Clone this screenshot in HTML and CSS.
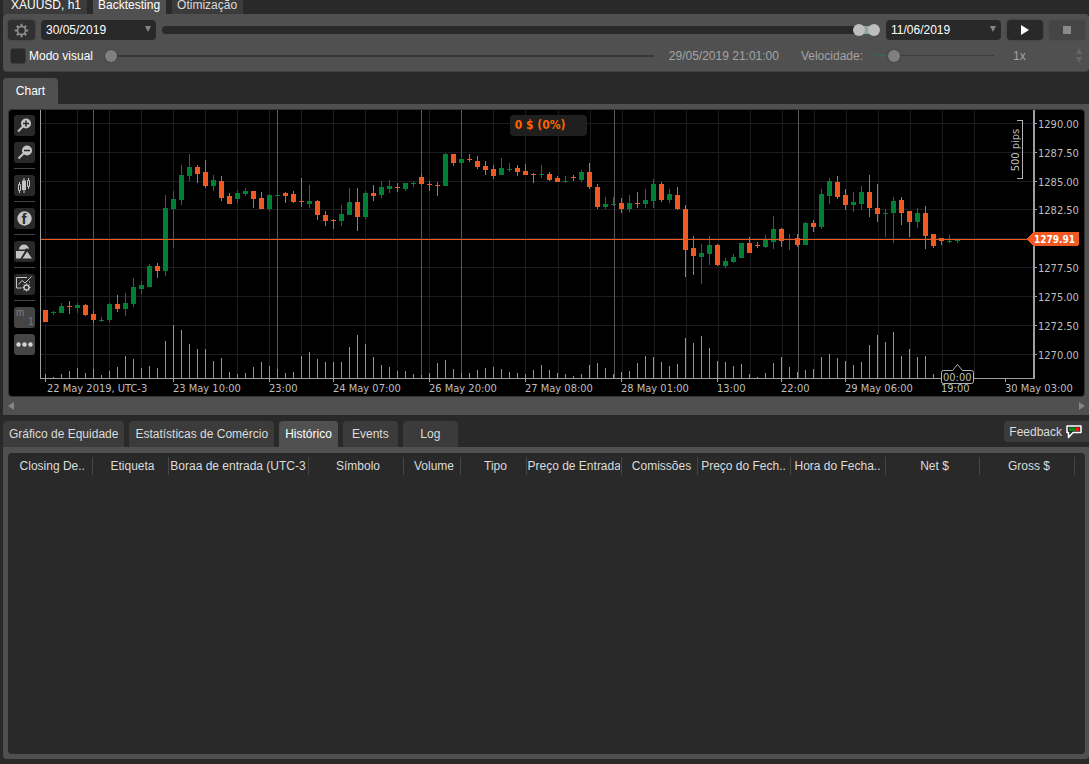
FILE: index.html
```
<!DOCTYPE html>
<html lang="pt">

<head>
    <meta charset="UTF-8">
    <meta name="viewport" content="width=device-width, initial-scale=1.0">
    <title>Backtesting</title>
    <link rel="stylesheet" href="styles.css">
</head>

<body>
    <nav class="tabs top-tabs">
        <button class="tab symbol">XAUUSD, h1</button>
        <button class="tab active">Backtesting</button>
        <button class="tab">Otimização</button>
    </nav>

    <section class="panel settings">
        <div class="row">
            <button class="icon-btn gear" aria-label="Configurações">
                <svg width="15" height="15" viewBox="0 0 15 15">
                    <circle cx="7.5" cy="7.5" r="4" fill="none" stroke="#909090" stroke-width="1.6"/>
                    <path d="M7.5 .8v2.4M7.5 11.8v2.4M.8 7.5h2.4M11.8 7.5h2.4M2.8 2.8l1.6 1.6M10.6 10.6l1.6 1.6M12.2 2.8l-1.6 1.6M4.4 10.6l-1.6 1.6" stroke="#909090" stroke-width="2"/>
                </svg>
            </button>
            <div class="date">
                <select aria-label="Data inicial"><option>30/05/2019</option></select>
            </div>
            <div class="range">
                <span class="range-fill"></span>
                <input type="range" min="0" max="1000" value="979" aria-label="Início">
                <input type="range" min="0" max="1000" value="1000" aria-label="Fim">
            </div>
            <div class="date">
                <select aria-label="Data final"><option>11/06/2019</option></select>
            </div>
            <button class="icon-btn play" aria-label="Iniciar">
                <svg width="8" height="10" viewBox="0 0 8 10"><path d="M0 0l8 5-8 5z" fill="#fff"/></svg>
            </button>
            <button class="icon-btn stop" aria-label="Parar" disabled>
                <svg width="8" height="8" viewBox="0 0 8 8"><path d="M0 0h8v8H0z" fill="#8a8a8a"/></svg>
            </button>
        </div>
        <div class="row visual">
            <label class="check"><input type="checkbox">Modo visual</label>
            <input class="slider progress" type="range" min="0" max="100" value="0" aria-label="Progresso">
            <span class="clock">29/05/2019 21:01:00</span>
            <label class="muted" for="speed">Velocidade:</label>
            <input class="slider speed" id="speed" type="range" min="0" max="100" value="12">
            <div class="spin">
                <input type="text" value="1x" aria-label="Multiplicador" readonly>
                <div class="spin-btns">
                    <button aria-label="Mais"></button>
                    <button class="down" aria-label="Menos"></button>
                </div>
            </div>
        </div>
    </section>

    <nav class="tabs chart-tabs">
        <button class="tab active">Chart</button>
    </nav>

    <section class="panel chart-panel">
        <div class="chart">
            <div class="tools">
                <button class="tool" aria-label="Zoom in">
                    <svg viewBox="0 0 21 21"><path d="M4 16.500l5-5" stroke="#c4c4c4" stroke-width="2"/><circle cx="12" cy="8.500" r="5" fill="#c4c4c4"/><path d="M9 8.500h6M12 5.500v6" stroke="#292929" stroke-width="1.500"/></svg>
                </button>
                <button class="tool" aria-label="Zoom out">
                    <svg viewBox="0 0 21 21"><path d="M4.500 16.500l5-5" stroke="#c4c4c4" stroke-width="2"/><circle cx="13" cy="8.500" r="5" fill="#c4c4c4"/><path d="M10 8.500h6" stroke="#292929" stroke-width="1.500"/></svg>
                </button>
                <hr>
                <button class="tool" aria-label="Chart type">
                    <svg viewBox="0 0 21 21">
                        <path d="M5.500 7v11M10 3v15M14.500 3v11" stroke="#c4c4c4"/>
                        <path d="M4.500 9.500h2v6h-2zM13.500 5.500h2v6h-2z" fill="#292929" stroke="#c4c4c4"/>
                        <path d="M8 5.500h4v9.500H8z" fill="#c4c4c4"/>
                    </svg>
                </button>
                <hr>
                <button class="tool" aria-label="Indicators">
                    <svg viewBox="0 0 21 21"><circle cx="10.500" cy="10.500" r="7.200" fill="#c4c4c4"/><text class="f" x="7.500" y="15.500">f</text></svg>
                </button>
                <hr>
                <button class="tool" aria-label="Drawing">
                    <svg viewBox="0 0 21 21" fill="#c4c4c4"><path d="M5 8.500a5 5 0 0 1 10 0l-1-1h-2L11 8.500zM2 10h9l-4.500 7.500H2zM13.200 10.500L18 17.500H8.500z"/></svg>
                </button>
                <hr>
                <button class="tool" aria-label="Chart settings">
                    <svg viewBox="0 0 21 21" fill="none" stroke="#c4c4c4">
                        <path d="M13 3.500H2.500v10.500h5M4.500 10.500L8 6.500l3 2.500 6.500-6.500M15.500 7.500v1"/>
                        <circle cx="12.500" cy="13.500" r="2.500" stroke-width="1.500"/>
                        <path d="M12.500 9.500v1.500M12.500 16v1.500M8.500 13.500H10M15 13.500h1.500M9.700 10.700l1 1M14.300 15.300l1 1M15.300 10.700l-1 1M10.700 15.300l-1 1"/>
                    </svg>
                </button>
                <hr>
                <button class="tool light" aria-label="Timeframe">
                    <svg viewBox="0 0 21 21" fill="#7c7c7c"><text x="2" y="9">m</text><text x="14" y="18">1</text></svg>
                </button>
                <button class="tool light" aria-label="More">
                    <svg viewBox="0 0 21 21" fill="#d4d4d4"><circle cx="4.500" cy="10.500" r="2.200"/><circle cx="10.500" cy="10.500" r="2.200"/><circle cx="16.500" cy="10.500" r="2.200"/></svg>
                </button>
            </div>
            <div class="plot">
                <svg id="plot"></svg>
                <div class="profit">0 $ (0%)</div>
            </div>
        </div>
        <div class="scroll">
            <button aria-label="Voltar"></button>
            <button class="next" aria-label="Avançar"></button>
        </div>
    </section>

    <div class="bottom-bar">
        <nav class="tabs">
            <button class="tab">Gráfico de Equidade</button>
            <button class="tab">Estatísticas de Comércio</button>
            <button class="tab active">Histórico</button>
            <button class="tab">Events</button>
            <button class="tab">Log</button>
        </nav>
        <button class="feedback">Feedback
            <svg width="16" height="14" viewBox="0 0 16 14">
                <path d="M1 1h14v6.500H7l-4.500 5V7.500H1z" fill="#292929" stroke="#fff" stroke-width="1.500" stroke-linejoin="round"/>
                <path d="M3 2.500h6v3.500H3z" fill="#0a8a12"/>
                <path d="M9 2.500h4.500v3.500H9z" fill="#f01414"/>
            </svg>
        </button>
    </div>

    <section class="panel history">
        <div class="list">
            <table>
                <colgroup>
                    <col class="w84"><col class="w76"><col class="w140"><col class="w95"><col class="w57"><col class="w66"><col class="w95"><col class="w76"><col class="w93"><col class="w95"><col class="w94"><col class="w95"><col class="w11">
                </colgroup>
                <thead>
                    <tr>
                        <th><span>Closing De..</span></th>
                        <th><span>Etiqueta</span></th>
                        <th class="long"><span>Boraa de entrada (UTC-3</span></th>
                        <th><span>Símbolo</span></th>
                        <th><span>Volume</span></th>
                        <th><span>Tipo</span></th>
                        <th class="long"><span>Preço de Entrada</span></th>
                        <th><span>Comissões</span></th>
                        <th class="long"><span>Preço do Fech..</span></th>
                        <th class="long"><span>Hora do Fecha..</span></th>
                        <th><span>Net $</span></th>
                        <th><span>Gross $</span></th>
                        <td></td>
                    </tr>
                </thead>
            </table>
        </div>
    </section>

    <script>
        // one row per bar: direction, high, body top, body bottom, low, volume top
        const bars = [
            ['d',200,200,212,212,264], ['u',201,202,203,205,267], ['u',193,196,203,203,264], ['d',191,196,197,204,261],
            ['u',193,195,198,203,258], ['d',194,195,205,206,263], ['d',201,204,210,213,259], ['u',207,210,211,212,265],
            ['u',193,194,210,212,261], ['d',185,194,199,202,257], ['u',183,193,199,206,246], ['u',168,177,194,197,249],
            ['u',171,175,179,184,258], ['u',154,156,177,177,256], ['d',153,156,161,168,258], ['u',85,98,161,166,231],
            ['u',81,89,99,138,215], ['u',55,65,90,95,220], ['u',44,57,66,71,234], ['d',55,57,64,73,239],
            ['d',50,62,76,78,239], ['u',65,70,76,81,251], ['d',66,71,88,91,248], ['d',83,86,94,94,262],
            ['u',80,83,89,93,264], ['u',78,81,84,86,263], ['d',81,81,89,98,257], ['d',82,88,99,99,252],
            ['u',84,85,99,101,256], ['u',76,85,86,87,259], ['d',82,83,86,93,263], ['d',81,84,92,93,262],
            ['d',68,91,92,97,246], ['u',75,91,94,98,242], ['d',90,91,105,110,249], ['d',101,105,111,116,252],
            ['d',109,110,111,119,252], ['u',95,104,111,116,252], ['u',78,92,105,105,237], ['d',78,92,107,121,225],
            ['u',81,83,107,109,234], ['d',75,83,86,91,247], ['u',71,77,85,88,255], ['u',70,76,79,83,257],
            ['d',73,77,78,82,261], ['u',73,73,79,81,261], ['u',71,73,74,77,264], ['d',63,67,74,75,265],
            ['d',71,74,75,81,263], ['d',72,75,76,86,253], ['u',43,44,76,76,250], ['d',44,44,53,56,259],
            ['u',45,49,53,53,263], ['d',44,49,50,52,263], ['d',46,51,57,59,260], ['d',51,56,60,65,258],
            ['d',55,59,66,69,257], ['u',48,58,65,65,259], ['u',53,59,60,62,262], ['d',55,58,62,66,263],
            ['d',54,61,65,65,264], ['d',63,64,65,73,260], ['u',55,64,65,68,255], ['d',62,64,70,71,260],
            ['d',66,68,72,72,263], ['u',66,71,72,73,264], ['d',65,67,68,71,266], ['u',60,62,70,72,264],
            ['d',53,62,77,79,255], ['d',74,77,97,99,253], ['u',87,94,97,99,258], ['u',87,94,95,96,264],
            ['d',88,93,99,103,262], ['u',85,93,99,102,261], ['d',82,93,94,98,253], ['u',79,90,94,98,246],
            ['u',69,74,91,98,247], ['d',72,74,90,92,252], ['u',79,84,90,93,256], ['d',77,85,99,100,254],
            ['d',95,99,140,167,228], ['d',126,138,146,165,233], ['u',134,143,147,174,226], ['u',126,135,144,155,238],
            ['d',134,135,155,156,251], ['u',148,151,156,158,252], ['u',144,147,152,153,256], ['u',133,133,148,148,254],
            ['d',127,133,143,143,264], ['d',132,135,136,138,267], ['u',125,129,137,138,263], ['u',106,119,132,139,253],
            ['d',118,119,131,137,247], ['u',124,129,130,140,257], ['d',124,128,135,137,262], ['u',112,113,135,135,260],
            ['d',110,113,117,122,259], ['u',79,84,117,119,247], ['u',68,71,86,94,244], ['d',66,72,87,89,248],
            ['d',79,85,95,100,251], ['u',82,92,95,102,255], ['u',76,82,94,100,252], ['d',65,82,98,107,235],
            ['d',74,98,104,112,225], ['u',99,103,104,127,232], ['u',87,91,103,133,222], ['d',87,90,103,115,246],
            ['d',101,101,112,127,239], ['u',98,103,112,118,247], ['d',96,103,126,139,246], ['d',124,124,136,138,264],
            ['d',128,128,131,135,268], ['u',125,131,132,133,268], ['u',130,130,131,133,268]
        ];
        const prices = [
            [13, '1290.00'], [42, '1287.50'], [71, '1285.00'], [99, '1282.50'], [128, ''],
            [157, '1277.50'], [186, '1275.00'], [215, '1272.50'], [244, '1270.00']
        ];
        const times = [
            [5, '22 May 2019, UTC-3'], [133, '23 May 10:00'], [229, '23:00'], [293, '24 May 07:00'],
            [389, '26 May 20:00'], [485, '27 May 08:00'], [581, '28 May 01:00'], [677, '13:00'],
            [741, '22:00'], [805, '29 May 06:00'], [901, '19:00'], [965, '30 May 03:00']
        ];
        const sessions = [53, 237, 381, 421, 574, 758];
        const base = 268;
        const lastPrice = 129;

        const svg = document.getElementById('plot');

        function rect(cls, x, y, w, h) {
            return `<rect class="${cls}" x="${x}" y="${y}" width="${w}" height="${h}"/>`;
        }

        function text(cls, x, y, str) {
            return `<text class="${cls}" x="${x}" y="${y}">${str}</text>`;
        }

        function draw() {
            const axis = svg.clientWidth - 51;
            let out = '';

            // grid
            for (const [y] of prices) out += rect('grid', 1, y, axis, 1);
            for (let i = 0; i < 30; i++) out += rect('grid', 5 + i * 32 + (i > 15 ? 1 : 0), 0, 1, base);
            for (const x of sessions) out += rect('session', x, 0, 1, base);

            // candles and volume
            bars.forEach(([dir, high, top, bottom, low, vol], i) => {
                const x = 5 + i * 8;
                out += rect('vol', x, vol, 1, base - vol);
                out += rect(dir, x, high, 1, low - high);
                out += rect(dir, x - 2, top, 5, bottom - top);
            });

            // axes
            out += rect('axis', 0, 0, 1, base + 1);
            out += rect('axis', 0, base, axis + 1, 1);
            out += rect('axis', axis, 0, 2, base + 1);
            for (const [y, str] of prices) {
                out += rect('axis', axis + 2, y, 2, 1);
                out += text('label', axis + 5, y + 5, str);
            }
            for (const [x, str] of times) {
                out += rect('axis', x, base, 1, 4);
                out += text('label', Math.max(x, 7), 282, str);
            }

            // last price
            out += rect('d', 1, lastPrice, axis, 1);
            out += `<path class="d" d="M${axis - 7} 129l7-7h44q2 0 2 2v10q0 2-2 2h-44z"/>`;
            out += text('price', axis + 1, 133, '1279.91');

            // pips ruler
            out += `<path class="line" d="M${axis - 16} 10.5h5v58h-5"/>`;
            out += `<text class="label" text-anchor="middle" transform="translate(${axis - 14} 40) rotate(-90)">500 pips</text>`;

            // time left on the current bar
            out += '<path class="line left" d="M903.500 260.500h9l5-6 5 6h9q2 0 2 2v9q0 2-2 2h-28q-2 0-2-2v-9q0-2 2-2z"/>';
            out += text('label', 903, 271, '00:00');

            svg.innerHTML = out;
        }

        window.addEventListener('resize', draw);
        draw();
    </script>
</body>

</html>
```
FILE: styles.css
```
* {
    box-sizing: border-box;
}
body {
    margin: 0;
    min-height: 100vh;
    display: flex;
    flex-direction: column;
    padding: 0 0 5px 3px;
    background-color: #292929;
    color: #dcdcdc;
    font-family: "Liberation Sans", Arial, sans-serif;
    font-size: 12px;
}
button, input, select {
    font: inherit;
    color: inherit;
    border: none;
    margin: 0;
    padding: 0;
}
button {
    background: none;
}
svg {
    display: block;
}

/* tabs */
.tabs {
    display: flex;
    gap: 5px;
}
.tab {
    min-width: 55px;
    height: 26px;
    padding: 0 6px;
    background-color: #3b3b3b;
    border-radius: 4px 4px 0 0;
    white-space: nowrap;
}
.tab.active {
    background-color: #505050;
    color: #fff;
}
.top-tabs {
    gap: 6px;
}
.top-tabs .tab {
    height: 14px;
    padding: 0 6px 4px 5px;
    line-height: 10px;
    border-radius: 0;
}
.top-tabs .symbol {
    padding: 0 6px 4px 8px;
    color: #fff;
}
.chart-tabs {
    margin-top: 6px;
}

.panel {
    background-color: #505050;
}

/* settings */
.settings {
    padding: 6px 4px 5px 5px;
    border-radius: 4px;
    border-bottom: 1px solid #404040;
}
.row {
    display: flex;
    align-items: center;
    gap: 6px;
}
.icon-btn {
    display: flex;
    align-items: center;
    justify-content: center;
    height: 20px;
    background-color: #292929;
    border-radius: 4px;
    box-shadow: 0 0 2px #333;
}
.gear {
    width: 27px;
    background-color: #303030;
}
.play, .stop {
    width: 36px;
}
.stop {
    background-color: #454545;
    box-shadow: 0 0 2px #444;
}
.date {
    position: relative;
    width: 115px;
}
.date select {
    appearance: none;
    display: block;
    width: 100%;
    height: 20px;
    padding: 0 5px;
    background-color: #292929;
    border-radius: 4px;
    color: #fff;
}
.date::after {
    content: "";
    position: absolute;
    right: 5px;
    top: 6px;
    border: 3px solid transparent;
    border-top: 6px solid #858585;
    border-bottom: none;
    pointer-events: none;
}
.range {
    position: relative;
    flex: 1;
    height: 8px;
    border-radius: 4px;
    background-color: #292929;
}
.range-fill {
    position: absolute;
    left: 97%;
    right: 6px;
    top: 0;
    bottom: 0;
    background-color: #8fa898;
}
.range input {
    appearance: none;
    position: absolute;
    left: 0;
    top: -3px;
    width: 100%;
    height: 14px;
    background: none;
    pointer-events: none;
}
.range input::-webkit-slider-thumb {
    appearance: none;
    width: 12px;
    height: 12px;
    border-radius: 50%;
    background-color: #bebebe;
    pointer-events: auto;
}
.visual {
    gap: 0;
    height: 26px;
    padding-top: 5px;
    color: #a4a4a4;
}
.check {
    display: flex;
    align-items: center;
    gap: 3px;
    padding-left: 2px;
    color: #fff;
    white-space: nowrap;
}
.check input {
    appearance: none;
    width: 16px;
    height: 16px;
    background-color: #292929;
    border: 1px solid #3c3c3c;
    border-radius: 3px;
}
.slider {
    appearance: none;
    height: 12px;
    background: linear-gradient(#383838, #383838) center / 100% 2px no-repeat;
}
.slider::-webkit-slider-thumb {
    appearance: none;
    width: 12px;
    height: 12px;
    border-radius: 50%;
    background-color: #808080;
    box-shadow: 0 0 2px #333;
}
.progress {
    flex: 1;
    margin: 0 15px 0 12px;
}
.clock {
    margin-right: 22px;
}
.speed {
    width: 119px;
    margin: 0 19px 0 12px;
    background:
        linear-gradient(90deg, #2f6b4c 16px, transparent 16px) center / 100% 1px no-repeat,
        repeating-linear-gradient(90deg, #3c3c3c 0 7px, #505050 7px 8px) center / 100% 1px no-repeat;
}
.spin {
    display: flex;
    align-items: center;
    justify-content: space-between;
    width: 69px;
    margin-right: 3px;
}
.spin input {
    width: 30px;
    background: none;
}
.spin-btns {
    display: grid;
    gap: 3px;
}
.spin-btns button, .scroll button {
    width: 0;
    height: 0;
    border: 3px solid transparent;
    border-top: none;
    border-bottom: 6px solid #666;
}
.spin-btns .down {
    border-top: 6px solid #666;
    border-bottom: none;
}

/* chart */
.chart-panel {
    padding: 5px 4px 0 5px;
}
.chart {
    display: flex;
    background-color: #000;
    border: 1px solid #333;
    border-radius: 4px;
    overflow: hidden;
}
.tools {
    width: 31px;
    display: flex;
    flex-direction: column;
    gap: 6px;
    padding: 5px 5px 0;
}
.tools hr {
    width: 21px;
    height: 1px;
    margin: -1px 0 0;
    border: none;
    background-color: #444;
}
.tool {
    width: 21px;
    height: 21px;
    background-color: #292929;
    border-radius: 3px;
}
.tool.light {
    background-color: #454545;
}
.tool text {
    font-size: 10px;
}
.tool .f {
    font-size: 15px;
    font-weight: bold;
    fill: #292929;
}
.plot {
    position: relative;
    flex: 1;
}
#plot {
    width: 100%;
    height: 286px;
    shape-rendering: crispEdges;
    font-family: "DejaVu Sans Condensed", Tahoma, sans-serif;
    font-size: 11px;
}
.grid {
    fill: #1c1c20;
}
.session {
    fill: #58585a;
}
.vol {
    fill: #3cb4e6;
}
.u {
    fill: #008037;
}
.d {
    fill: #f15923;
}
.axis {
    fill: #a0a0a0;
}
.label {
    fill: #bebebe;
}
.price {
    fill: #fff;
    font-size: 10px;
    font-weight: bold;
}
.line {
    fill: none;
    stroke: #b4b4b4;
}
.left {
    fill: #000;
    shape-rendering: auto;
}
.profit {
    position: absolute;
    left: 45%;
    top: 5px;
    width: 77px;
    height: 21px;
    padding-left: 5px;
    background-color: #1f1f1f;
    border-radius: 4px;
    color: #ff6400;
    font: bold 12px/21px "DejaVu Sans Condensed", Tahoma, sans-serif;
}
.scroll {
    display: flex;
    align-items: center;
    justify-content: space-between;
    height: 18px;
}
.scroll button {
    border: 4px solid transparent;
    border-left: none;
    border-right: 6px solid #858585;
}
.scroll .next {
    border-left: 6px solid #858585;
    border-right: none;
}

/* history */
.bottom-bar {
    display: flex;
    align-items: flex-start;
    justify-content: space-between;
    margin-top: 6px;
}
.feedback {
    display: flex;
    align-items: center;
    gap: 4px;
    height: 21px;
    padding: 0 7px 0 5px;
    background-color: #3b3b3b;
    border-radius: 4px 0 0 4px;
}
.history {
    flex: 1;
    display: flex;
    padding: 6px 4px 5px 5px;
    border-radius: 0 0 4px 4px;
}
.list {
    flex: 1;
    padding-top: 4px;
    background-color: #292929;
    border-radius: 4px;
}
table {
    width: 100%;
    table-layout: fixed;
    border-collapse: collapse;
}
th {
    height: 18px;
    padding: 0 0 0 5px;
    border-right: 1px solid #454545;
    font-weight: normal;
    white-space: nowrap;
}
th.long {
    padding: 0 1px;
}
th span {
    display: block;
    overflow: hidden;
}
.w84 { width: 84px; }
.w76 { width: 76px; }
.w140 { width: 140px; }
.w95 { width: 95px; }
.w57 { width: 57px; }
.w66 { width: 66px; }
.w93 { width: 93px; }
.w94 { width: 94px; }
.w11 { width: 11px; }
```
